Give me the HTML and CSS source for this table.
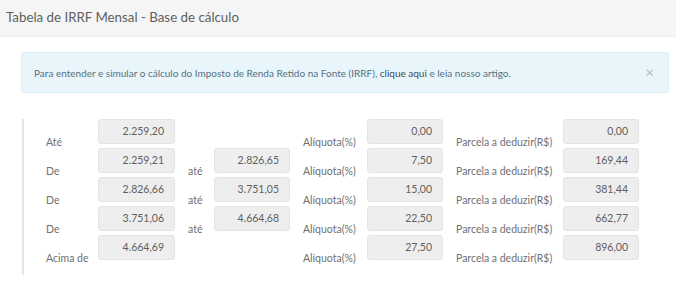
FILE: index.html
```html
<!DOCTYPE html>
<html lang="pt-BR">
<head>
<meta charset="utf-8">
<title>Tabela de IRRF Mensal</title>
<link rel="stylesheet" href="styles.css">
</head>
<body>
<div class="panel-heading">Tabela de IRRF Mensal - Base de cálculo</div>
<div class="panel-body">
  <div class="alert">
    <span>Para entender e simular o cálculo do Imposto de Renda Retido na Fonte (IRRF), <a href="#">clique aqui</a> e leia nosso artigo.</span>
    <span class="close">×</span>
  </div>
  <div class="table-box">
    <div class="grid">
      <span class="lbl">Até</span>
      <div class="inp">2.259,20</div>
      <span></span>
      <span></span>
      <span class="lbl pl">Alíquota(%)</span>
      <div class="inp">0,00</div>
      <span class="lbl pl">Parcela a deduzir(R$)</span>
      <div class="inp">0,00</div>

      <span class="lbl">De</span>
      <div class="inp">2.259,21</div>
      <span class="lbl pl">até</span>
      <div class="inp">2.826,65</div>
      <span class="lbl pl">Alíquota(%)</span>
      <div class="inp">7,50</div>
      <span class="lbl pl">Parcela a deduzir(R$)</span>
      <div class="inp">169,44</div>

      <span class="lbl">De</span>
      <div class="inp">2.826,66</div>
      <span class="lbl pl">até</span>
      <div class="inp">3.751,05</div>
      <span class="lbl pl">Alíquota(%)</span>
      <div class="inp">15,00</div>
      <span class="lbl pl">Parcela a deduzir(R$)</span>
      <div class="inp">381,44</div>

      <span class="lbl">De</span>
      <div class="inp">3.751,06</div>
      <span class="lbl pl">até</span>
      <div class="inp">4.664,68</div>
      <span class="lbl pl">Alíquota(%)</span>
      <div class="inp">22,50</div>
      <span class="lbl pl">Parcela a deduzir(R$)</span>
      <div class="inp">662,77</div>

      <span class="lbl">Acima de</span>
      <div class="inp">4.664,69</div>
      <span></span>
      <span></span>
      <span class="lbl pl">Alíquota(%)</span>
      <div class="inp">27,50</div>
      <span class="lbl pl">Parcela a deduzir(R$)</span>
      <div class="inp">896,00</div>
    </div>
  </div>
</div>
</body>
</html>
```
FILE: styles.css
```css
html, body {
  margin: 0;
  padding: 0;
  background: #ffffff;
  font-family: Lato, "Open Sans", sans-serif;
  color: #666;
}
.panel-heading {
  height: 36px;
  line-height: 34px;
  padding-left: 6px;
  background: #f5f5f5;
  border-bottom: 1px solid #eeeeee;
  font-size: 13.3px;
  color: #606060;
}
.panel-body {
  padding: 15px 7px 0 21px;
}
.alert {
  display: flex;
  align-items: center;
  justify-content: space-between;
  height: 39px;
  padding: 0 14px 0 12px;
  background: #e8f6fb;
  border: 1px solid #d9eef6;
  border-radius: 3px;
  font-size: 10px;
  color: #56707f;
}
.alert a {
  color: #3a4b57;
  text-decoration: none;
}
.close {
  font-size: 15px;
  color: #b5bcbf;
  line-height: 1;
}
.table-box {
  margin-top: 26px;
  margin-left: 1px;
  border-left: 2px solid #e6e6e6;
  padding: 0 0 15px 22px;
  width: 600px;
}
.grid {
  display: grid;
  grid-template-columns: 52px 77px 39px 76px 77px 76px 120px 76px;
  grid-auto-rows: 25px;
  row-gap: 4px;
}
.lbl {
  font-size: 10.5px;
  line-height: 14px;
  padding-top: 16px;
  white-space: nowrap;
  color: #707070;
}
.pl {
  padding-left: 13px;
}
.inp {
  box-sizing: border-box;
  height: 25px;
  background: #eeeeee;
  border: 1px solid #e4e4e4;
  border-radius: 3px;
  font-size: 10.5px;
  color: #606060;
  text-align: right;
  padding: 5px 10px 0 0;
}
```
